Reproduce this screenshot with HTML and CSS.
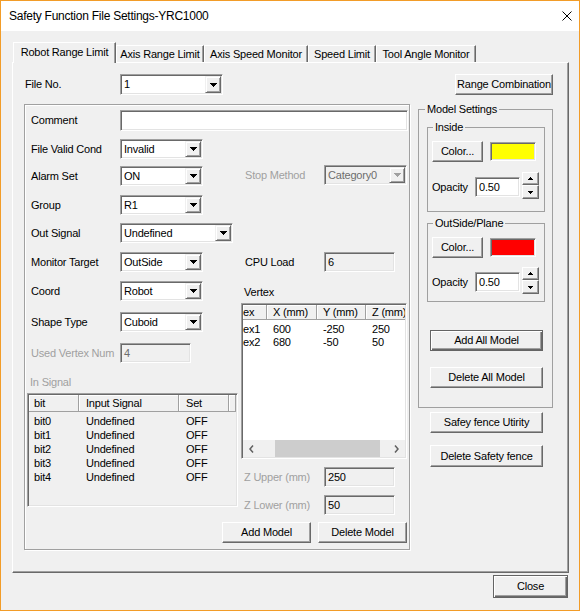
FILE: index.html
```html
<!DOCTYPE html>
<html>
<head>
<meta charset="utf-8">
<title>Safety Function File Settings-YRC1000</title>
<link rel="stylesheet" href="styles.css">
</head>
<body>
<div class="window">
  <div class="titlebar">
    <span class="title">Safety Function File Settings-YRC1000</span>
    <svg class="x-icon" width="10" height="10" viewBox="0 0 10 10"><path d="M0.5 0.5L9.5 9.5M9.5 0.5L0.5 9.5" stroke="#000" stroke-width="1" fill="none"/></svg>
  </div>
  <div class="client">
    <div class="tabs">
      <div class="tab active t1">Robot Range Limit</div>
      <div class="tab t2">Axis Range Limit</div>
      <div class="tab t3">Axis Speed Monitor</div>
      <div class="tab t4">Speed Limit</div>
      <div class="tab t5">Tool Angle Monitor</div>
    </div>
    <div class="panel">
      <div class="col-left">
        <div class="file-row">
          <span class="lbl lbl-file">File No.</span>
          <div class="combo combo-file"><span class="val">1</span><span class="dd"><svg width="7" height="4" viewBox="0 0 7 4"><path d="M0 0H7V1H6V2H5V3H4V4H3V3H2V2H1V1H0Z"/></svg></span></div>
        </div>
        <div class="group">
          <div class="comment-row">
            <span class="lbl">Comment</span>
            <div class="edit edit-comment"></div>
          </div>
          <div class="split">
            <div class="sub-left">
              <div class="frow mt8"><span class="lbl">File Valid Cond</span><div class="combo combo-s"><span class="val">Invalid</span><span class="dd"><svg width="7" height="4" viewBox="0 0 7 4"><path d="M0 0H7V1H6V2H5V3H4V4H3V3H2V2H1V1H0Z"/></svg></span></div></div>
              <div class="frow mt7"><span class="lbl">Alarm Set</span><div class="combo combo-s"><span class="val">ON</span><span class="dd"><svg width="7" height="4" viewBox="0 0 7 4"><path d="M0 0H7V1H6V2H5V3H4V4H3V3H2V2H1V1H0Z"/></svg></span></div></div>
              <div class="frow mt9"><span class="lbl">Group</span><div class="combo combo-s"><span class="val">R1</span><span class="dd"><svg width="7" height="4" viewBox="0 0 7 4"><path d="M0 0H7V1H6V2H5V3H4V4H3V3H2V2H1V1H0Z"/></svg></span></div></div>
              <div class="frow mt8"><span class="lbl">Out Signal</span><div class="combo combo-l"><span class="val">Undefined</span><span class="dd"><svg width="7" height="4" viewBox="0 0 7 4"><path d="M0 0H7V1H6V2H5V3H4V4H3V3H2V2H1V1H0Z"/></svg></span></div></div>
              <div class="frow mt9"><span class="lbl">Monitor Target</span><div class="combo combo-s"><span class="val">OutSide</span><span class="dd"><svg width="7" height="4" viewBox="0 0 7 4"><path d="M0 0H7V1H6V2H5V3H4V4H3V3H2V2H1V1H0Z"/></svg></span></div></div>
              <div class="frow mt9"><span class="lbl">Coord</span><div class="combo combo-s"><span class="val">Robot</span><span class="dd"><svg width="7" height="4" viewBox="0 0 7 4"><path d="M0 0H7V1H6V2H5V3H4V4H3V3H2V2H1V1H0Z"/></svg></span></div></div>
              <div class="frow mt11"><span class="lbl">Shape Type</span><div class="combo combo-s"><span class="val">Cuboid</span><span class="dd"><svg width="7" height="4" viewBox="0 0 7 4"><path d="M0 0H7V1H6V2H5V3H4V4H3V3H2V2H1V1H0Z"/></svg></span></div></div>
              <div class="frow mt11"><span class="lbl dis">Used Vertex Num</span><div class="edit edit-s disabled gray">4</div></div>
              <span class="lbl dis lbl-insig">In Signal</span>
              <div class="lv lv-sig">
                <div class="lv-head">
                  <div class="hc s1">bit</div>
                  <div class="hc s2">Input Signal</div>
                  <div class="hc s3">Set</div>
                  <div class="hc fill"></div>
                </div>
                <div class="lv-body sig-body">
                  <div class="lr"><span class="s1">bit0</span><span class="s2">Undefined</span><span class="s3">OFF</span></div>
                  <div class="lr"><span class="s1">bit1</span><span class="s2">Undefined</span><span class="s3">OFF</span></div>
                  <div class="lr"><span class="s1">bit2</span><span class="s2">Undefined</span><span class="s3">OFF</span></div>
                  <div class="lr"><span class="s1">bit3</span><span class="s2">Undefined</span><span class="s3">OFF</span></div>
                  <div class="lr"><span class="s1">bit4</span><span class="s2">Undefined</span><span class="s3">OFF</span></div>
                </div>
              </div>
            </div>
            <div class="sub-right">
              <div class="frow mt34"><span class="lbl dis">Stop Method</span><div class="combo combo-s disabled"><span class="val">Category0</span><span class="dd"><svg width="7" height="4" viewBox="0 0 7 4"><path d="M0 0H7V1H6V2H5V3H4V4H3V3H2V2H1V1H0Z"/></svg></span></div></div>
              <div class="frow mt67"><span class="lbl">CPU Load</span><div class="edit edit-s disabled">6</div></div>
              <span class="lbl lbl-vertex">Vertex</span>
              <div class="lv lv-vtx">
                <div class="lv-head vtx-head">
                  <div class="hc v1">ex</div>
                  <div class="hc v2">X (mm)</div>
                  <div class="hc v3">Y (mm)</div>
                  <div class="hc v4 last">Z (mm)</div>
                </div>
                <div class="lv-body vtx-body">
                  <div class="lr vr"><span class="v1">ex1</span><span class="v2">600</span><span class="v3">-250</span><span class="v4">250</span></div>
                  <div class="lr vr"><span class="v1">ex2</span><span class="v2">680</span><span class="v3">-50</span><span class="v4">50</span></div>
                </div>
                <div class="hscroll">
                  <div class="sb-arrow"><svg width="5" height="8" viewBox="0 0 5 8"><path d="M4 0.5L1 4L4 7.5" stroke="#606060" stroke-width="1.5" fill="none"/></svg></div>
                  <div class="sb-track"><div class="sb-thumb"></div></div>
                  <div class="sb-arrow"><svg width="5" height="8" viewBox="0 0 5 8"><path d="M1 0.5L4 4L1 7.5" stroke="#606060" stroke-width="1.5" fill="none"/></svg></div>
                </div>
              </div>
              <div class="frow mt8"><span class="lbl dis lbl-z">Z Upper (mm)</span><div class="edit edit-s disabled">250</div></div>
              <div class="frow mt8"><span class="lbl dis lbl-z">Z Lower (mm)</span><div class="edit edit-s disabled">50</div></div>
            </div>
          </div>
          <div class="model-btns">
            <button class="btn btn-model">Add Model</button>
            <button class="btn btn-model">Delete Model</button>
          </div>
        </div>
      </div>
      <div class="col-right">
        <button class="btn btn-range">Range Combination</button>
        <fieldset class="gb gb-model">
          <legend>Model Settings</legend>
          <fieldset class="gb gb-sub gb-inside">
            <legend>Inside</legend>
            <div class="color-row"><button class="btn btn-color">Color...</button><div class="swatch yellow"></div></div>
            <div class="op-row">
              <span class="lbl lbl-op">Opacity</span>
              <div class="edit edit-op">0.50</div>
              <div class="spin">
                <div class="spin-btn up"><svg width="5" height="3" viewBox="0 0 5 3"><path d="M2 0H3V1H4V2H5V3H0V2H1V1H2Z"/></svg></div>
                <div class="spin-btn down"><svg width="5" height="3" viewBox="0 0 5 3"><path d="M0 0H5V1H4V2H3V3H2V2H1V1H0Z"/></svg></div>
              </div>
            </div>
          </fieldset>
          <fieldset class="gb gb-sub gb-outside">
            <legend>OutSide/Plane</legend>
            <div class="color-row"><button class="btn btn-color">Color...</button><div class="swatch red"></div></div>
            <div class="op-row op-row-out">
              <span class="lbl lbl-op">Opacity</span>
              <div class="edit edit-op">0.50</div>
              <div class="spin">
                <div class="spin-btn up"><svg width="5" height="3" viewBox="0 0 5 3"><path d="M2 0H3V1H4V2H5V3H0V2H1V1H2Z"/></svg></div>
                <div class="spin-btn down"><svg width="5" height="3" viewBox="0 0 5 3"><path d="M0 0H5V1H4V2H3V3H2V2H1V1H0Z"/></svg></div>
              </div>
            </div>
          </fieldset>
          <button class="btn btn-default btn-wide btn-addall">Add All Model</button>
          <button class="btn btn-wide btn-delall">Delete All Model</button>
        </fieldset>
        <button class="btn btn-wide btn-fence">Safey fence Utirity</button>
        <button class="btn btn-wide btn-delfence">Delete Safety fence</button>
      </div>
    </div>
    <div class="footer">
      <button class="btn btn-default btn-close">Close</button>
    </div>
  </div>
</div>
</body>
</html>
```

FILE: styles.css
```css
* { box-sizing: border-box; }
html, body { margin: 0; padding: 0; background: #fff; }
body {
  font-family: "Liberation Sans", Arial, sans-serif;
  font-size: 11px;
  letter-spacing: -0.2px;
  color: #000;
}
button { font: inherit; letter-spacing: inherit; color: #000; margin: 0; }

.window {
  width: 580px;
  height: 611px;
  border: 1px solid #f29c28;
  background: #f0f0f0;
  display: flex;
  flex-direction: column;
}

/* title bar */
.titlebar {
  height: 30px;
  flex: none;
  background: #fff;
  display: flex;
  align-items: center;
  justify-content: space-between;
  padding: 0 7px 0 8px;
}
.title { font-size: 12px; letter-spacing: -0.25px; line-height: 16px; }
.x-icon { display: block; }

/* client area */
.client {
  flex: 1;
  padding: 11px 10px 0 11px;
  display: flex;
  flex-direction: column;
}

/* tabs */
.tabs {
  display: flex;
  align-items: flex-start;
  height: 21px;
  margin: 0 0 -1px 1px;
  position: relative;
  z-index: 1;
}
.tab {
  height: 17px;
  margin-top: 3px;
  background: #f0f0f0;
  border-top: 1px solid #fff;
  border-left: 1px solid #fff;
  border-right: 1px solid #696969;
  box-shadow: inset -1px 0 0 #a0a0a0;
  text-align: center;
  line-height: 16px;
  white-space: nowrap;
}
.tab.active {
  height: 21px;
  margin-top: 0;
  line-height: 18px;
}
.t1 { width: 103px; }
.t2 { width: 88px; }
.t3 { width: 104px; }
.t4 { width: 68px; }
.t5 { width: 100px; }

/* panel */
.panel {
  width: 557px;
  height: 511px;
  flex: none;
  border: 1px solid;
  border-color: #fff #696969 #696969 #fff;
  box-shadow: inset -1px -1px 0 #a0a0a0;
  display: flex;
  align-items: flex-start;
  padding: 11px 0 0 11px;
}

.col-left { width: 386px; flex: none; }
.col-right {
  width: 135px;
  flex: none;
  margin-left: 8px;
  display: flex;
  flex-direction: column;
  align-items: flex-start;
}

/* labels */
.lbl { display: block; flex: none; white-space: nowrap; line-height: 13px; }
.dis { color: #a0a0a0; }
.lbl-file { width: 96px; padding-left: 1px; }
.comment-row .lbl, .sub-left .lbl { width: 95px; padding-left: 6px; }
.sub-right .lbl { width: 83px; padding-left: 4px; }
.sub-right .lbl-z { padding-left: 3px; }
.sub-left .lbl-insig { padding-left: 5px; margin-top: 13px; }
.sub-right .lbl-vertex { padding-left: 3px; margin-top: 14px; }

.file-row { display: flex; align-items: center; height: 21px; }

/* main group box */
.group {
  margin-top: 9px;
  height: 446px;
  border: 1px solid #a0a0a0;
  box-shadow: 1px 1px 0 #fff, inset 1px 1px 0 #fff;
  padding-top: 5px;
}
.comment-row { display: flex; align-items: center; height: 21px; }
.split { display: flex; align-items: flex-start; }
.sub-left { width: 216px; flex: none; }
.sub-right { width: 166px; flex: none; }

.frow { display: flex; align-items: center; height: 20px; }
.mt7 { margin-top: 7px; }
.mt8 { margin-top: 8px; }
.mt9 { margin-top: 9px; }
.mt11 { margin-top: 11px; }
.mt34 { margin-top: 34px; }
.mt67 { margin-top: 67px; }

/* combo boxes */
.combo {
  display: flex;
  height: 20px;
  padding: 1px;
  background: #fff;
  border: 1px solid;
  border-color: #a0a0a0 #fff #fff #a0a0a0;
  box-shadow: inset 1px 1px 0 #696969, inset -1px -1px 0 #e3e3e3;
  flex: none;
}
.combo .val { flex: 1; line-height: 16px; padding-left: 2px; white-space: nowrap; overflow: hidden; }
.combo .dd {
  width: 16px;
  flex: none;
  display: flex;
  align-items: center;
  justify-content: center;
  background: #f0f0f0;
  border: 1px solid;
  border-color: #f0f0f0 #696969 #696969 #f0f0f0;
  box-shadow: inset 1px 1px 0 #fff, inset -1px -1px 0 #a0a0a0;
}
.combo .dd svg { display: block; fill: #000; }
.combo-file { width: 103px; height: 21px; }
.combo-file .val { line-height: 17px; }
.combo-s { width: 83px; }
.combo-l { width: 113px; }
.combo.disabled { background: #f0f0f0; color: #6d6d6d; }
.combo.disabled .dd svg { fill: #a0a0a0; }

/* edit boxes */
.edit {
  height: 20px;
  flex: none;
  background: #fff;
  border: 1px solid;
  border-color: #a0a0a0 #fff #fff #a0a0a0;
  box-shadow: inset 1px 1px 0 #696969, inset -1px -1px 0 #e3e3e3;
  padding-left: 3px;
  line-height: 18px;
  white-space: nowrap;
}
.edit.disabled { background: #f0f0f0; }
.edit.gray { color: #6d6d6d; }
.edit-comment { width: 288px; height: 21px; }
.edit-s { width: 71px; }

/* list views */
.lv {
  border: 1px solid;
  border-color: #a0a0a0 #fff #fff #a0a0a0;
  box-shadow: inset 1px 1px 0 #696969, inset -1px -1px 0 #e3e3e3;
  padding: 1px;
  display: flex;
  flex-direction: column;
  overflow: hidden;
}
.lv-sig {
  width: 211px;
  height: 114px;
  margin: 4px 0 0 2px;
  background: #f0f0f0;
}
.lv-vtx {
  width: 166px;
  height: 156px;
  margin-top: 4px;
  background: #fff;
}
.lv-head {
  display: flex;
  height: 17px;
  flex: none;
  background: #f0f0f0;
  border-bottom: 1px solid #a0a0a0;
}
.vtx-head { height: 15px; }
.hc {
  flex: none;
  border-right: 1px solid #a0a0a0;
  box-shadow: inset 1px 1px 0 #fff;
  line-height: 16px;
  white-space: nowrap;
  overflow: hidden;
}
.vtx-head .hc { line-height: 14px; }
.hc.fill { flex: 1; }
.hc.last { flex: 1; border-right: none; }

.lv-body { flex: 1; }
.sig-body { padding-top: 2px; }
.vtx-body { padding-top: 3px; }
.lr { display: flex; height: 14px; line-height: 14px; white-space: nowrap; }
.lr.vr { height: 13px; line-height: 13px; }
.lr > span { flex: none; }

.s1 { width: 50px; padding-left: 5px; }
.s2 { width: 100px; padding-left: 7px; }
.s3 { width: 50px; padding-left: 7px; }

.v1 { width: 24px; padding-left: 0; }
.v2 { width: 50px; padding-left: 6px; }
.v3 { width: 49px; padding-left: 6px; }
.v4 { width: 39px; padding-left: 6px; }

.hscroll { display: flex; height: 17px; flex: none; background: #f0f0f0; }
.sb-arrow { width: 17px; flex: none; display: flex; align-items: center; justify-content: center; }
.sb-arrow svg { display: block; }
.sb-track { flex: 1; }
.sb-thumb { margin-left: 15px; width: 105px; height: 100%; background: #cdcdcd; }

/* buttons */
.btn {
  display: block;
  flex: none;
  height: 21px;
  padding: 0;
  background: #f0f0f0;
  border: 1px solid;
  border-color: #fff #696969 #696969 #fff;
  box-shadow: inset -1px -1px 0 #a0a0a0;
  text-align: center;
  line-height: 17px;
  white-space: nowrap;
}
.btn-default {
  border-color: #646464;
  box-shadow: inset 1px 1px 0 #fff, inset -1px -1px 0 #696969, inset -2px -2px 0 #a0a0a0;
}
.model-btns {
  display: flex;
  justify-content: flex-end;
  gap: 7px;
  margin-top: 7px;
  padding-right: 2px;
}
.btn-model { width: 89px; }
.btn-range { width: 98px; align-self: flex-end; }

/* group boxes on the right */
.gb {
  margin: 0;
  min-width: 0;
  border: 1px solid #a0a0a0;
}
.gb > legend { padding: 0 2px; line-height: 13px; }
.gb-model {
  margin-top: 8px;
  width: 135px;
  height: 305px;
  padding: 0 6px;
}
.gb-sub {
  width: 118px;
  margin: 5px 0 0 2px;
  padding: 7px 6px 0 4px;
}
.gb-sub > legend { margin-left: 1px; }
.gb-inside { height: 91px; }
.gb-outside { height: 85px; }

.color-row { display: flex; align-items: flex-start; }
.btn-color { width: 51px; }
.swatch {
  width: 46px;
  height: 19px;
  margin: 1px 0 0 7px;
  border: 1px solid;
  border-color: #a0a0a0 #fff #fff #a0a0a0;
  box-shadow: inset 1px 1px 0 #696969, inset -1px -1px 0 #e3e3e3;
}
.swatch.yellow { background: #ffff00; }
.swatch.red { background: #ff0000; }

.op-row { display: flex; align-items: flex-end; margin-top: 10px; }
.op-row-out { margin-top: 9px; }
.lbl-op { width: 43px; line-height: 20px; margin-bottom: 2px; }
.edit-op { width: 45px; margin-bottom: 2px; }
.spin { width: 17px; margin-left: 2px; flex: none; display: flex; flex-direction: column; }
.spin-btn {
  display: flex;
  align-items: center;
  justify-content: center;
  background: #f0f0f0;
  border: 1px solid;
  border-color: #fff #696969 #696969 #fff;
  box-shadow: inset -1px -1px 0 #a0a0a0;
}
.spin-btn.up { height: 13px; }
.spin-btn.down { height: 14px; }
.spin-btn svg { display: block; fill: #000; }

.btn-wide { width: 113px; }
.btn-addall { margin: 28px 0 0 5px; }
.btn-delall { margin: 16px 0 0 5px; }
.btn-fence { margin: 4px 0 0 12px; }
.btn-delfence { margin: 12px 0 0 12px; height: 22px; }

/* footer */
.footer { display: flex; justify-content: flex-end; margin-top: 2px; padding-right: 1px; }
.btn-close { width: 75px; height: 23px; line-height: 19px; }
```
